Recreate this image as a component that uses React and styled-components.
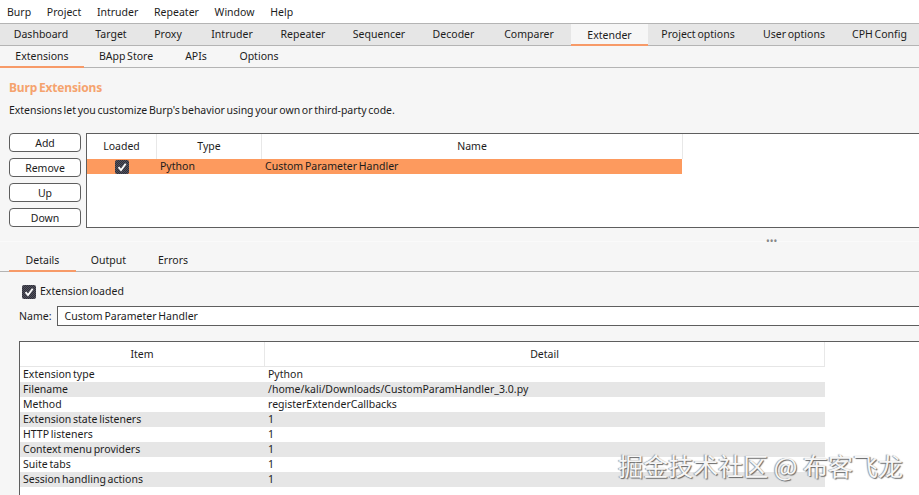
import React from 'react';
import styled, { createGlobalStyle } from 'styled-components';

const GlobalStyle = createGlobalStyle`
  html, body {
    margin: 0;
    padding: 0;
    background: #f6f6f6;
    overflow: hidden;
  }
  body {
    font-family: "Noto Sans", "Open Sans", sans-serif;
    font-size: 10.5px;
    letter-spacing: 0.01px;
    word-spacing: -1px;
    color: #1c1c1c;
  }
`;

const Page = styled.div`
  position: relative;
  width: 919px;
  height: 495px;
  overflow: hidden;
`;

const MenuBar = styled.div`
  display: flex;
  gap: 15.7px;
  height: 23px;
  padding-left: 7px;
  align-items: center;
  background: #fff;
  border-bottom: 1px solid #b4b4b4;
`;

const MainTabs = styled.div`
  display: flex;
  height: 21px;
  background: #e6e6e6;
  border-bottom: 1px solid #b4b4b4;
`;

const MainTab = styled.div`
  flex: none;
  width: ${p => p.$w}px;
  padding-bottom: 1px;
  box-sizing: border-box;
  display: flex;
  align-items: center;
  justify-content: center;
  ${p => p.$active && `
    background: #f6f6f6;
    box-shadow: inset 0 -2px 0 #f79a68;
    height: 22px;
  `}
`;

const SubTabs = styled.div`
  display: flex;
  height: 21px;
  border-bottom: 1px solid #b4b4b4;
`;

const SubTab = styled.div`
  width: ${p => p.$w}px;
  padding-bottom: 1px;
  box-sizing: border-box;
  display: flex;
  align-items: center;
  justify-content: center;
  ${p => p.$active && `box-shadow: 0 1px 0 #f79a68, inset 0 -1px 0 #f79a68;`}
`;

const Content = styled.div`
  padding: 11px 0 0 9px;
`;

const Title = styled.div`
  font-size: 12px;
  letter-spacing: -0.17px;
  word-spacing: -1px;
  font-weight: 700;
  color: #f5a36e;
  height: 17px;
  line-height: 17px;
`;

const Description = styled.div`
  margin-top: 6px;
  height: 17px;
  line-height: 17px;
  letter-spacing: -0.03px;
`;

const TopRow = styled.div`
  display: flex;
  gap: 5px;
  margin-top: 14px;
`;

const ButtonStack = styled.div`
  display: flex;
  flex-direction: column;
  gap: 6px;
`;

const Button = styled.div`
  box-sizing: border-box;
  width: 72px;
  height: 19px;
  display: flex;
  align-items: center;
  justify-content: center;
  background: #fff;
  border: 1px solid #5e5e5e;
  border-radius: 4px;
`;

const ListBox = styled.div`
  box-sizing: border-box;
  flex: 1;
  height: 95px;
  background: #fff;
  border: 1px solid #5e5e5e;
  border-right: none;
`;

const HeaderRow = styled.div`
  display: flex;
  height: ${p => p.$h}px;
`;

const HeaderCell = styled.div`
  box-sizing: border-box;
  width: ${p => p.$w}px;
  padding-bottom: 1px;
  display: flex;
  align-items: center;
  justify-content: center;
  border-right: 1px solid #e8e8e8;
`;

const PluginRow = styled.div`
  display: flex;
  width: 595px;
  height: 15px;
  background: #fd9a5e;
  align-items: center;
`;

const CheckCell = styled.div`
  width: 70px;
  display: flex;
  justify-content: center;
`;

const PluginCell = styled.div`
  width: ${p => p.$w}px;
  padding: 0 0 1px 3px;
  box-sizing: border-box;
`;

const CheckBox = styled.div`
  width: 14px;
  height: 14px;
  background: repeating-conic-gradient(#2f2f3a 0 25%, #53535e 0 50%) 0 0 / 2px 2px;
  border-radius: 2px;
  display: flex;
  flex: none;
  align-items: center;
  justify-content: center;
`;

const Splitter = styled.div`
  position: relative;
  margin-top: 13px;
  height: 1px;
  background: #fafafa;
`;

const Grip = styled.div`
  position: absolute;
  top: -2px;
  left: 766px;
  font-size: 10px;
  line-height: 4px;
  letter-spacing: 0;
  color: #888;
`;

const LowerTabs = styled.div`
  display: flex;
  height: 28px;
  margin-top: 1px;
  padding-left: 9px;
  border-bottom: 1px solid #b4b4b4;
`;

const LowerTab = styled.div`
  width: ${p => p.$w}px;
  display: flex;
  align-items: center;
  justify-content: center;
  padding-top: 5px;
  box-sizing: border-box;
  ${p => p.$active && `box-shadow: 0 1px 0 #f79a68, inset 0 -1px 0 #f79a68;`}
`;

const LoadedRow = styled.div`
  display: flex;
  align-items: center;
  gap: 4px;
  height: 14px;
  margin: 13px 0 0 22px;
`;

const LoadedLabel = styled.span`
  margin-top: -2px;
`;

const NameRow = styled.div`
  display: flex;
  align-items: center;
  gap: 6px;
  margin: 7px 0 0 19px;
`;

const NameInput = styled.div`
  box-sizing: border-box;
  flex: 1;
  height: 20px;
  padding: 0 0 1px 6px;
  display: flex;
  align-items: center;
  background: #fff;
  border: 1px solid #5e5e5e;
  border-right: none;
`;

const DetailBox = styled.div`
  box-sizing: border-box;
  height: 160px;
  margin: 15px 0 0 19px;
  background: #fff;
  border: 1px solid #5e5e5e;
  border-right: none;
  border-bottom: none;
`;

const HeaderRule = styled.div`
  width: 805px;
  height: 1px;
  background: #e6e6e6;
`;

const DetailRow = styled.div`
  display: flex;
  width: 805px;
  height: 15px;
  align-items: center;
  background: ${p => (p.$odd ? '#e6e6e6' : '#fff')};
`;

const DetailCell = styled.div`
  width: ${p => p.$w}px;
  padding: 0 0 1px 3px;
  box-sizing: border-box;
  white-space: nowrap;
`;

const Watermark = styled.div`
  position: absolute;
  right: 16px;
  bottom: 16px;
  font-family: "Noto Sans CJK SC", "Noto Sans", sans-serif;
  font-size: 25px;
  letter-spacing: 0;
  word-spacing: 0;
  line-height: 28px;
  color: #f6f6f6;
  text-shadow: 1px 1px 1px #666, -1px 0 1px #999;
  white-space: nowrap;
`;

const Check = () => (
  <svg width="10" height="10" viewBox="0 0 10 10">
    <path d="M1.5 5.2 L4 8 L8.7 1.8" fill="none" stroke="#fff" strokeWidth="1.8" />
  </svg>
);

const menus = ['Burp', 'Project', 'Intruder', 'Repeater', 'Window', 'Help'];
const mainTabs = [
  ['Dashboard', 82],
  ['Target', 58],
  ['Proxy', 56],
  ['Intruder', 72],
  ['Repeater', 70],
  ['Sequencer', 82],
  ['Decoder', 67],
  ['Comparer', 84],
  ['Extender', 77, true],
  ['Project options', 100],
  ['User options', 92],
  ['CPH Config', 79],
];
const subTabs = [
  ['Extensions', 84, true],
  ['BApp Store', 84],
  ['APIs', 56],
  ['Options', 70],
];
const lowerTabs = [
  ['Details', 67, true],
  ['Output', 65],
  ['Errors', 64],
];
const details = [
  ['Extension type', 'Python'],
  ['Filename', '/home/kali/Downloads/CustomParamHandler_3.0.py'],
  ['Method', 'registerExtenderCallbacks'],
  ['Extension state listeners', '1'],
  ['HTTP listeners', '1'],
  ['Context menu providers', '1'],
  ['Suite tabs', '1'],
  ['Session handling actions', '1'],
];

export default function App() {
  return (
    <Page>
      <GlobalStyle />
      <MenuBar>
        {menus.map(m => <span key={m}>{m}</span>)}
      </MenuBar>
      <MainTabs>
        {mainTabs.map(([label, w, active]) => (
          <MainTab key={label} $w={w} $active={active}>{label}</MainTab>
        ))}
      </MainTabs>
      <SubTabs>
        {subTabs.map(([label, w, active]) => (
          <SubTab key={label} $w={w} $active={active}>{label}</SubTab>
        ))}
      </SubTabs>
      <Content>
        <Title>Burp Extensions</Title>
        <Description>Extensions let you customize Burp's behavior using your own or third-party code.</Description>
        <TopRow>
          <ButtonStack>
            {['Add', 'Remove', 'Up', 'Down'].map(b => <Button key={b}>{b}</Button>)}
          </ButtonStack>
          <ListBox>
            <HeaderRow $h={25}>
              <HeaderCell $w={70}>Loaded</HeaderCell>
              <HeaderCell $w={105}>Type</HeaderCell>
              <HeaderCell $w={421}>Name</HeaderCell>
            </HeaderRow>
            <PluginRow>
              <CheckCell>
                <CheckBox><Check /></CheckBox>
              </CheckCell>
              <PluginCell $w={105}>Python</PluginCell>
              <PluginCell $w={420}>Custom Parameter Handler</PluginCell>
            </PluginRow>
          </ListBox>
        </TopRow>
      </Content>
      <Splitter>
        <Grip>•••</Grip>
      </Splitter>
      <LowerTabs>
        {lowerTabs.map(([label, w, active]) => (
          <LowerTab key={label} $w={w} $active={active}>{label}</LowerTab>
        ))}
      </LowerTabs>
      <LoadedRow>
        <CheckBox><Check /></CheckBox>
        <LoadedLabel>Extension loaded</LoadedLabel>
      </LoadedRow>
      <NameRow>
        Name:
        <NameInput>Custom Parameter Handler</NameInput>
      </NameRow>
      <DetailBox>
        <HeaderRow $h={24}>
          <HeaderCell $w={245}>Item</HeaderCell>
          <HeaderCell $w={560}>Detail</HeaderCell>
        </HeaderRow>
        <HeaderRule />
        {details.map(([item, value], i) => (
          <DetailRow key={item} $odd={i % 2 === 1}>
            <DetailCell $w={245}>{item}</DetailCell>
            <DetailCell $w={560}>{value}</DetailCell>
          </DetailRow>
        ))}
      </DetailBox>
      <Watermark>掘金技术社区 @ 布客飞龙</Watermark>
    </Page>
  );
}
